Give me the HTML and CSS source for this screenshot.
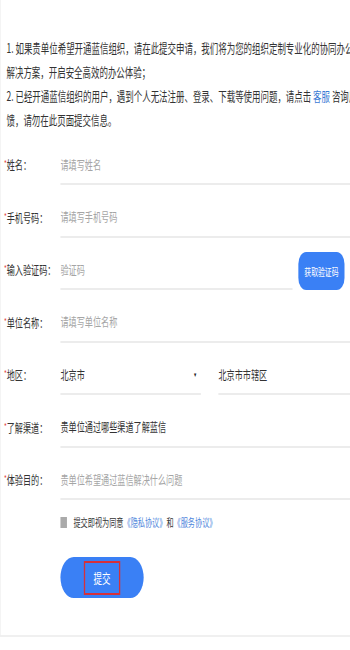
FILE: index.html
```html
<!DOCTYPE html>
<html lang="zh-CN">
<head>
    <meta charset="UTF-8">
    <meta name="viewport" content="width=device-width, initial-scale=1.0">
    <title>申请开通</title>
    <link rel="stylesheet" href="styles.css">
</head>
<body>
    <div class="page">
        <div class="intro">
            <p>1. 如果贵单位希望开通蓝信组织，请在此提交申请，我们将为您的组织定制专业化的协同办公<br>解决方案，开启安全高效的办公体验；</p>
            <p>2. 已经开通蓝信组织的用户，遇到个人无法注册、登录、下载等使用问题，请点击 <a href="#">客服</a> 咨询反馈，请勿在此页面提交信息。</p>
        </div>

        <form class="apply-form">
            <div class="row">
                <label class="label"><i class="req">*</i>姓名：</label>
                <div class="field"><input type="text" placeholder="请填写姓名"></div>
            </div>
            <div class="row">
                <label class="label"><i class="req">*</i>手机号码：</label>
                <div class="field"><input type="text" placeholder="请填写手机号码"></div>
            </div>
            <div class="row">
                <label class="label"><i class="req">*</i>输入验证码：</label>
                <div class="field"><input type="text" placeholder="验证码"></div>
                <button type="button" class="code-btn">获取验证码</button>
            </div>
            <div class="row">
                <label class="label"><i class="req">*</i>单位名称：</label>
                <div class="field"><input type="text" placeholder="请填写单位名称"></div>
            </div>
            <div class="row">
                <label class="label"><i class="req">*</i>地区：</label>
                <div class="field province"><span>北京市</span><span class="arrow">▾</span></div>
                <div class="field city"><span>北京市市辖区</span></div>
            </div>
            <div class="row">
                <label class="label"><i class="req">*</i>了解渠道：</label>
                <div class="field"><span>贵单位通过哪些渠道了解蓝信</span></div>
            </div>
            <div class="row">
                <label class="label"><i class="req">*</i>体验目的：</label>
                <div class="field"><input type="text" placeholder="贵单位希望通过蓝信解决什么问题"></div>
            </div>

            <div class="agree">
                <span class="check"></span>
                <span>提交即视为同意<a href="#">《隐私协议》</a>和<a href="#">《服务协议》</a></span>
            </div>

            <button type="button" class="submit-btn"><span>提交</span></button>
        </form>
    </div>
</body>
</html>
```

FILE: styles.css
```css
html, body { margin: 0; overflow: hidden; background: #fff; }
body { font-family: "Noto Sans CJK SC", "Noto Sans", sans-serif; color: #333; }

/* the whole sheet is drawn narrow, as in the original capture */
.page { width: 538px; transform: scaleX(0.65); transform-origin: 0 0; padding-bottom: 37px; border-left: 1px solid #eee; border-bottom: 2px solid #f0f0f0; }

.intro { width: 547px; padding: 36px 0 0 9px; }
.intro p { margin: 0; font-size: 13px; line-height: 24px; }
.intro a { color: #3a7bd5; text-decoration: none; }

.apply-form { margin-top: 13px; }
.row { display: flex; align-items: flex-end; height: 40px; margin-bottom: 12.5px; }
.label { width: 87px; padding-left: 5px; line-height: 40px; font-size: 12.5px; color: #333; flex-shrink: 0; white-space: nowrap; }
.req { font-style: normal; color: #e23c3c; font-size: 9px; vertical-align: 3px; }
.field { flex: 1; height: 40px; box-sizing: border-box; border-bottom: 2px solid #ececec; display: flex; align-items: center; font-size: 12.5px; color: #333; }
.field input { border: none; outline: none; width: 100%; padding: 0; font: inherit; color: #333; background: transparent; }
.field input::placeholder { color: #a5a5a5; }

.code-btn { width: 71px; height: 38px; margin: 0 9px 0 9px; border: none; border-radius: 12px; background: #3a80f5; color: #fff; font-family: inherit; font-size: 10.5px; padding: 0; }

.province { flex: 0 0 216px; justify-content: space-between; padding-right: 6px; box-sizing: border-box; }
.arrow { font-size: 7px; color: #222; }
.city { margin-left: 27px; }

.agree { display: flex; align-items: center; margin: 14px 0 0 92px; height: 16px; font-size: 11px; color: #333; }
.check { width: 10px; height: 11px; background: #aaa; margin-right: 10px; }
.agree a { color: #4d86dc; text-decoration: none; }

.submit-btn { display: flex; align-items: center; justify-content: center; width: 128px; height: 41px; margin: 27px 0 0 92px; border: none; border-radius: 20.5px; background: #3a80f5; padding: 0; }
.submit-btn span { display: flex; align-items: center; justify-content: center; width: 56px; height: 34px; box-sizing: border-box; border: 2px solid #d6303a; color: #fff; font-family: "Noto Sans CJK SC", sans-serif; font-size: 13px; }
```
